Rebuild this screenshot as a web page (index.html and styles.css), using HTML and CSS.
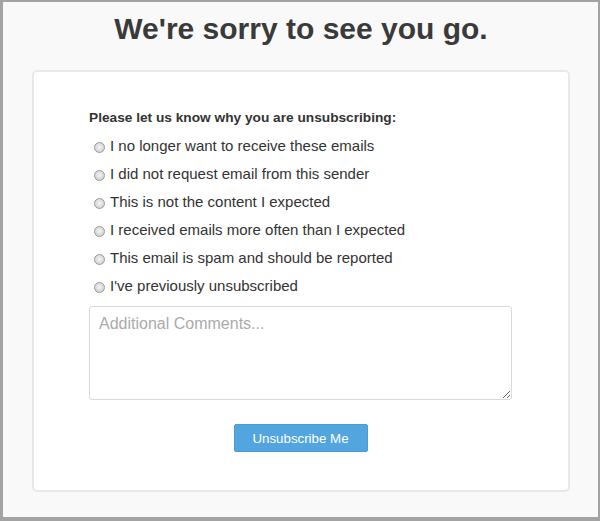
FILE: index.html
```html
<!DOCTYPE html>
<html lang="en">
<head>
    <meta charset="UTF-8">
    <meta name="viewport" content="width=device-width, initial-scale=1.0">
    <title>Unsubscribe</title>
    <link rel="stylesheet" href="styles.css">
</head>
<body>
    <div class="frame">
        <h1 class="title">We're sorry to see you go.</h1>

        <div class="card">
            <form class="unsub-form">
                <p class="question">Please let us know why you are unsubscribing:</p>

                <label class="option"><input type="radio" name="reason"> I no longer want to receive these emails</label>
                <label class="option"><input type="radio" name="reason"> I did not request email from this sender</label>
                <label class="option"><input type="radio" name="reason"> This is not the content I expected</label>
                <label class="option"><input type="radio" name="reason"> I received emails more often than I expected</label>
                <label class="option"><input type="radio" name="reason"> This email is spam and should be reported</label>
                <label class="option"><input type="radio" name="reason"> I've previously unsubscribed</label>

                <textarea class="comments" placeholder="Additional Comments..."></textarea>

                <div class="actions">
                    <button type="submit" class="btn">Unsubscribe Me</button>
                </div>
            </form>
        </div>
    </div>
</body>
</html>
```

FILE: styles.css
```css
* {
    margin: 0;
    padding: 0;
    box-sizing: border-box;
}

body {
    font-family: 'Liberation Sans', Arial, Helvetica, sans-serif;
    color: #333;
    background: #f9f9f9;
}

.frame {
    height: 521px;
    border-style: solid;
    border-color: #a3a3a3;
    border-width: 2px 2px 4px 3px;
    background: #f9f9f9;
    padding: 0 28px 0 29px;
}

.title {
    text-align: center;
    font-size: 30px;
    font-weight: bold;
    color: #3a3a3a;
    line-height: 36px;
    padding-top: 9px;
    height: 68px;
}

.card {
    background: #fff;
    border: 2px solid #e8e8e8;
    border-radius: 5px;
    height: 422px;
    padding: 37px 56px 0 55px;
}

.question {
    font-size: 13.7px;
    font-weight: bold;
    color: #333;
    line-height: 18px;
    margin-bottom: 5px;
}

.option {
    display: flex;
    align-items: center;
    font-size: 15px;
    color: #333;
    line-height: 28px;
    height: 28px;
}

.option input {
    appearance: none;
    -webkit-appearance: none;
    width: 11px;
    height: 11px;
    margin: 2px 5px 0 5px;
    border: 1px solid #9a9a9a;
    border-radius: 50%;
    background: radial-gradient(circle at 50% 45%, #f4f4f4 0%, #dcdcdc 55%, #c4c4c4 100%);
}

.option input:checked {
    background: radial-gradient(circle, #444 0%, #444 35%, #e6e6e6 45%, #c4c4c4 100%);
}

.comments {
    display: block;
    width: 423px;
    height: 94px;
    margin-top: 6px;
    padding: 8px 9px;
    border: 1px solid #dadada;
    border-radius: 3px;
    font-family: inherit;
    font-size: 16px;
    color: #333;
}

.comments::placeholder {
    color: #aaa;
}

.actions {
    display: flex;
    justify-content: center;
    margin-top: 24px;
    width: 423px;
}

.btn {
    width: 134px;
    height: 28px;
    background: #52a5de;
    color: #fff;
    border: 1px solid #4a9bd4;
    border-radius: 2px;
    font-family: inherit;
    font-size: 13.3px;
    cursor: pointer;
}
```
